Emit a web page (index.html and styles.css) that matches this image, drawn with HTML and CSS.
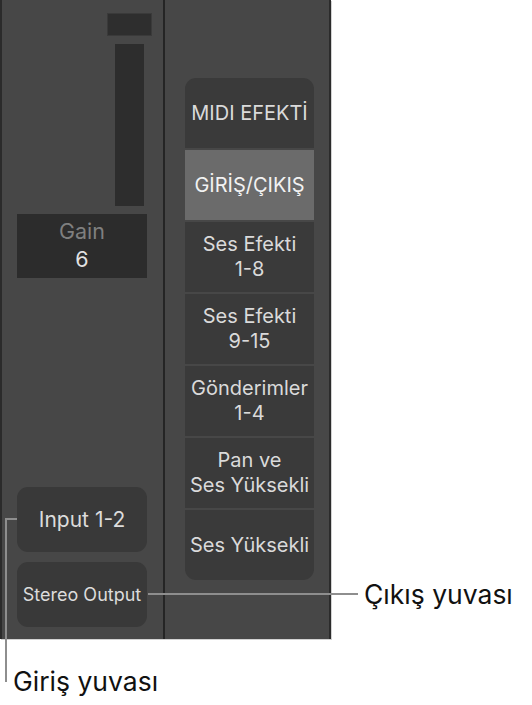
FILE: index.html
```html
<!DOCTYPE html>
<html lang="tr">
<head>
<meta charset="utf-8">
<title>Kanal şeridi</title>
<link rel="stylesheet" href="styles.css">
</head>
<body>
<div class="page">
  <div class="mixer">
    <div class="strip strip-main">
      <div class="peak"></div>
      <div class="meter"></div>
      <div class="gain">
        <span class="gain-label">Gain</span>
        <span class="gain-value">6</span>
      </div>
      <div class="slots">
        <div class="slot slot-input">Input 1-2</div>
        <div class="slot slot-output">Stereo Output</div>
      </div>
    </div>
    <div class="strip strip-side">
      <div class="tabs">
        <div class="tab caps">MIDI EFEKTİ</div>
        <div class="tab caps selected">GİRİŞ/ÇIKIŞ</div>
        <div class="tab">Ses Efekti<br>1-8</div>
        <div class="tab">Ses Efekti<br>9-15</div>
        <div class="tab">Gönderimler<br>1-4</div>
        <div class="tab">Pan ve<br>Ses Yüksekli</div>
        <div class="tab">Ses Yüksekli</div>
      </div>
    </div>
  </div>
  <div class="leader leader-in"></div>
  <div class="leader leader-out"></div>
  <div class="label label-in">Giriş yuvası</div>
  <div class="label label-out">Çıkış yuvası</div>
</div>
</body>
</html>
```

FILE: styles.css
```css
* { box-sizing: border-box; }

html, body {
  margin: 0;
  padding: 0;
  background: #ffffff;
}

body {
  font-family: Inter, "Liberation Sans", Arial, sans-serif;
}

.page {
  position: relative;
  width: 532px;
  height: 705px;
  overflow: hidden;
}

.mixer {
  display: flex;
  width: 331px;
  height: 639px;
  background: #474747;
  box-shadow: 1px 1px 0 #d2d2d2;
}

.strip {
  display: flex;
  flex-direction: column;
  height: 100%;
}

.strip-main {
  width: 165px;
  border-left: 2px solid #2b2b2b;
  border-right: 2px solid #252525;
}

.strip-side {
  width: 166px;
  border-right: 2px solid #2b2b2b;
}

.peak {
  margin: 13px 0 0 105px;
  width: 45px;
  height: 23px;
  background: #2e2e2e;
  border: 1px solid #3a3a3a;
}

.meter {
  margin: 8px 0 0 113px;
  width: 29px;
  height: 162px;
  background: #2d2d2d;
}

.gain {
  margin: 8px 0 0 15px;
  width: 130px;
  height: 64px;
  background: #2c2c2c;
  display: flex;
  flex-direction: column;
  align-items: center;
  padding-top: 3px;
  font-size: 21.5px;
  line-height: 28px;
}

.gain-label { color: #7f7f7f; }
.gain-value { color: #e2e2e2; }

.slots {
  margin: auto 0 12px 15px;
  display: flex;
  flex-direction: column;
  gap: 10px;
}

.slot {
  width: 130px;
  height: 65px;
  border-radius: 11px;
  background: #393939;
  color: #dcdcdc;
  display: flex;
  align-items: center;
  justify-content: center;
}

.slot-input { font-size: 21px; }
.slot-output { font-size: 18px; }

.tabs {
  margin: 78px 0 0 20px;
  width: 129px;
  display: flex;
  flex-direction: column;
  gap: 2px;
}

.tab {
  height: 70px;
  background: #3a3a3a;
  color: #dadada;
  font-size: 20px;
  line-height: 25px;
  text-align: center;
  display: flex;
  align-items: center;
  justify-content: center;
  white-space: nowrap;
  overflow: hidden;
}

.tab:first-child { border-radius: 11px 11px 0 0; }
.tab:last-child { border-radius: 0 0 11px 11px; }

.tab.selected {
  background: #6b6b6b;
  color: #f2f2f2;
}

.leader {
  position: absolute;
  border-color: #8e8e8e;
  border-style: solid;
  border-width: 0;
}

.leader-in {
  left: 5px;
  top: 518px;
  width: 12px;
  height: 164px;
  border-top-width: 2px;
  border-left-width: 2px;
}

.leader-out {
  left: 148px;
  top: 593px;
  width: 210px;
  height: 2px;
  border-top-width: 2px;
}

.label {
  position: absolute;
  font-size: 26.5px;
  line-height: 32px;
  color: #111111;
  white-space: nowrap;
}

.label-in { left: 13px; top: 665px; }
.label-out { left: 364px; top: 578px; }
```
